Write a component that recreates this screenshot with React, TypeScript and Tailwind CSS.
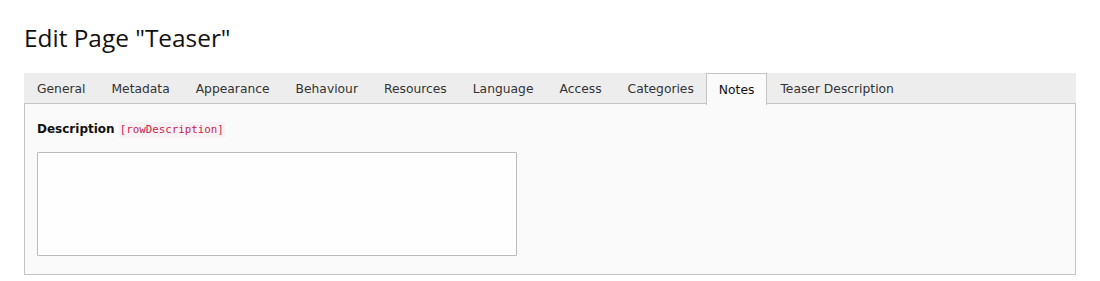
import React from "react";

const tabs = [
  "General",
  "Metadata",
  "Appearance",
  "Behaviour",
  "Resources",
  "Language",
  "Access",
  "Categories",
  "Notes",
  "Teaser Description",
];

export default function App() {
  return (
    <div className="bg-white min-h-[281px] px-6 pt-[22px] font-['Verdana','DejaVu_Sans',sans-serif]">
      <h1 className="font-['Open_Sans',sans-serif] text-[24.4px] leading-[32px] text-[#111]">
        Edit Page "Teaser"
      </h1>
      <div className="mt-[19px]">
        <div className="flex h-[31px] bg-[#ededed] border-b border-[#c4c4c4]">
          {tabs.map((t) => {
            const active = t === "Notes";
            return active ? (
              <div
                key={t}
                className="h-[32px] px-[12px] pt-[2px] flex items-center border border-b-0 border-[#c4c4c4] bg-[#fafafa] text-[12.3px] text-[#111] -ml-px"
              >
                {t}
              </div>
            ) : (
              <div key={t} className="h-[31px] px-[13px] pt-[2px] flex items-center text-[12.3px] text-[#333]">
                {t}
              </div>
            );
          })}
        </div>
        <div className="bg-[#fafafa] border border-t-0 border-[#c4c4c4] px-3 pt-[16px] pb-[18px]">
          <div className="flex items-baseline gap-[4px] h-[16px]">
            <span className="text-[12px] font-bold text-[#111]">Description</span>
            <code className="font-['DejaVu_Sans_Mono',monospace] text-[10.8px] text-[#c7254e] bg-[#f9f2f4] px-[1px]">
              [rowDescription]
            </code>
          </div>
          <textarea
            className="block mt-[16px] w-[480px] h-[104px] bg-[#fefefe] border border-[#bbbbbb] rounded-[1px] resize-none outline-none"
          />
        </div>
      </div>
    </div>
  );
}
